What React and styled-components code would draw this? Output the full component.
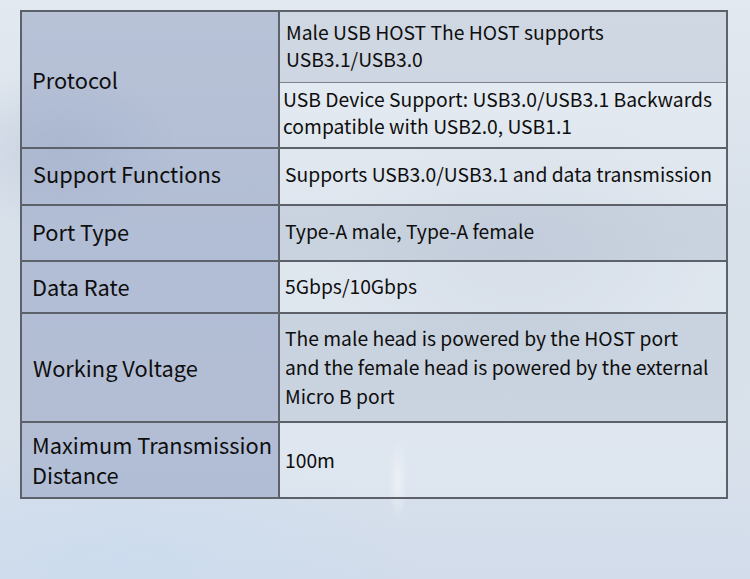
import React from "react";
import styled, { createGlobalStyle } from "styled-components";

const Global = createGlobalStyle`
  html, body { margin: 0; padding: 0; }
  body {
    width: 750px;
    height: 579px;
    overflow: hidden;
    font-family: "Noto Sans CJK SC", "Noto Sans", sans-serif;
  }
`;

const Page = styled.div`
  width: 750px;
  height: 579px;
  box-sizing: border-box;
  padding: 10px 0 0 20px;
  background:
    radial-gradient(ellipse 10px 40px at 398px 480px, rgba(255,255,255,0.55), rgba(255,255,255,0) 100%),
    radial-gradient(ellipse 120px 80px at 60px 150px, rgba(160,175,200,0.35), rgba(160,175,200,0) 100%),
    radial-gradient(ellipse 200px 140px at 520px 250px, rgba(170,180,200,0.25), rgba(170,180,200,0) 100%),
    radial-gradient(ellipse 300px 120px at 120px 560px, rgba(200,220,240,0.6), rgba(200,220,240,0) 100%),
    linear-gradient(180deg, #e3e9f0 0%, #d8e0ea 40%, #d9e1eb 75%, #d2dceb 100%);
`;

const Table = styled.table`
  width: 708px;
  table-layout: fixed;
  border-collapse: collapse;
  border: 2px solid #5d6169;
  color: #0e0e0e;
`;

const LabelCol = styled.col`
  width: 258px;
`;

const Label = styled.td`
  padding: 0 0 ${(p) => p.$lift || 0}px ${(p) => p.$indent || 10}px;
  font-size: 21.8px;
  line-height: 30px;
  border: 2px solid #5d6169;
  background: rgba(148, 163, 194, 0.55);
  vertical-align: middle;
  height: ${(p) => p.$h}px;
  box-sizing: border-box;
  white-space: nowrap;
`;

const Value = styled.td`
  padding: 0 12px ${(p) => p.$lift || 0}px ${(p) => p.$indent || 5}px;
  font-size: 19.3px;
  line-height: ${(p) => p.$lh || 29}px;
  border: 2px solid #5d6169;
  border-top: ${(p) => (p.$thinTop ? "1px solid #7d828a" : "2px solid #5d6169")};
  border-bottom: ${(p) => (p.$thinBottom ? "1px solid #7d828a" : "2px solid #5d6169")};
  background: ${(p) => (p.$dark ? "rgba(185, 195, 210, 0.45)" : "rgba(235, 240, 246, 0.35)")};
  vertical-align: middle;
  height: ${(p) => p.$h}px;
  box-sizing: border-box;
`;

export default function App() {
  return (
    <>
      <Global />
      <Page>
        <Table>
          <colgroup>
            <LabelCol />
            <col />
          </colgroup>
          <tbody>
            <tr>
              <Label rowSpan={2} $h={70}>Protocol</Label>
              <Value $h={71} $dark $thinBottom $indent={6} $lh={27} $lift={1}>
                Male USB HOST The HOST supports USB3.1/USB3.0
              </Value>
            </tr>
            <tr>
              <Value $h={66} $thinTop $indent={3} $lh={27} $lift={3}>
                USB Device Support: USB3.0/USB3.1 Backwards compatible with USB2.0, USB1.1
              </Value>
            </tr>
            <tr>
              <Label $h={57} $indent={11} $lift={5}>Support Functions</Label>
              <Value $h={57} $lift={5}>Supports USB3.0/USB3.1 and data transmission</Value>
            </tr>
            <tr>
              <Label $h={56} $lift={3}>Port Type</Label>
              <Value $h={56} $dark $lift={3}>Type-A male, Type-A female</Value>
            </tr>
            <tr>
              <Label $h={52} $lift={1}>Data Rate</Label>
              <Value $h={52} $lift={1}>5Gbps/10Gbps</Value>
            </tr>
            <tr>
              <Label $h={109} $indent={11}>Working Voltage</Label>
              <Value $h={109} $dark>
                The male head is powered by the HOST port and the female head is powered by the external Micro B port
              </Value>
            </tr>
            <tr>
              <Label $h={76}>
                Maximum Transmission
                <br />
                Distance
              </Label>
              <Value $h={76}>100m</Value>
            </tr>
          </tbody>
        </Table>
      </Page>
    </>
  );
}
